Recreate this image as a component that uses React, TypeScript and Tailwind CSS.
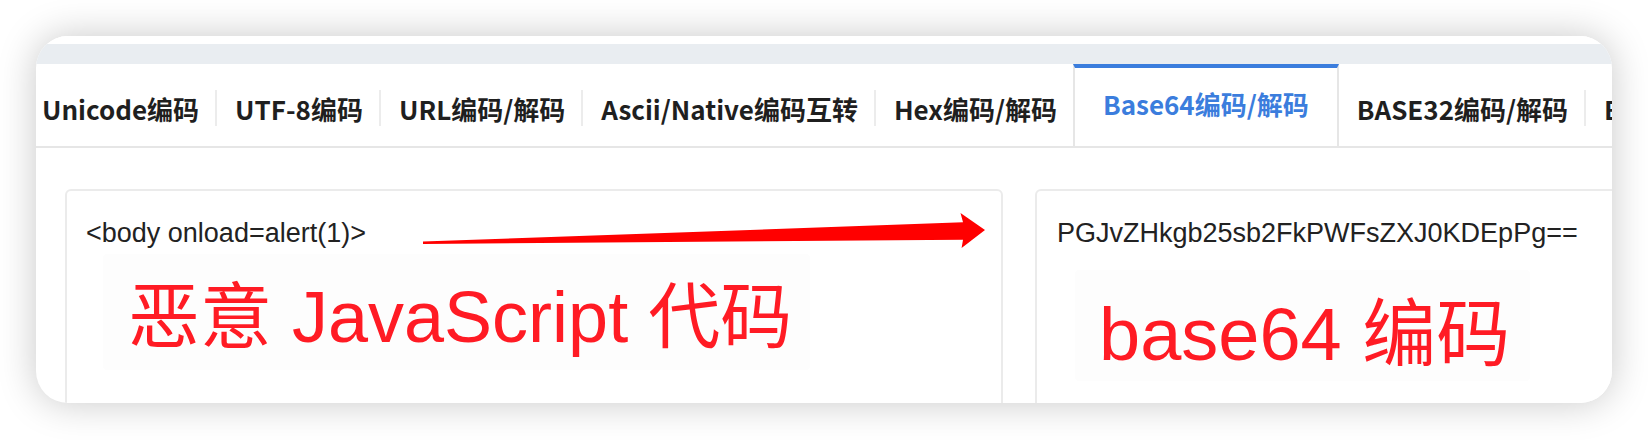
import React from 'react';

const tabs = [
  'Unicode编码',
  'UTF-8编码',
  'URL编码/解码',
  'Ascii/Native编码互转',
  'Hex编码/解码',
  'Base64编码/解码',
  'BASE32编码/解码',
  'BASE58编码/解码',
];

const ACTIVE = 5;

const cjk = { fontFamily: '"Noto Sans CJK SC", "Noto Sans", sans-serif' };
const sans = { fontFamily: '"Liberation Sans", "Noto Sans CJK SC", sans-serif' };

const Sep = () => <div className="self-center mt-[6px] h-9 w-[2px] shrink-0 bg-[#ececec]" />;

const TabBar: React.FC = () => {
  const items: React.ReactNode[] = [];
  tabs.forEach((t, i) => {
    const active = i === ACTIVE;
    if (i > 0 && !active && i - 1 !== ACTIVE) items.push(<Sep key={'s' + i} />);
    items.push(
      active ? (
        <div
          key={t}
          className="shrink-0 -mb-[2px] flex items-center bg-white border-t-4 border-x-2 border-t-[#3b7ddd] border-x-[#e6e6e6] px-[28px] pb-[10px] text-[26px] font-bold text-[#3b7ddd] whitespace-nowrap"
          style={cjk}
        >
          {t}
        </div>
      ) : (
        <div
          key={t}
          className="shrink-0 flex items-center pl-[18px] pr-[16px] pt-[7px] text-[26px] font-bold text-[#1f1f1f] whitespace-nowrap"
          style={cjk}
        >
          {t}
        </div>
      )
    );
  });
  return (
    <div className="h-[84px] shrink-0 flex items-stretch border-b-2 border-[#e6e6e6] overflow-hidden">
      <div className="flex items-stretch -ml-[12px]">{items}</div>
    </div>
  );
};

export default function App() {
  return (
    <div className="w-[1648px] h-[440px] bg-white pt-9 pl-9 overflow-hidden">
      <div className="w-[1576px] h-[367px] rounded-[32px] overflow-hidden bg-white shadow-[0_0_38px_rgba(0,0,0,0.22)] flex flex-col">
        <div className="h-2 shrink-0 bg-white" />
        <div className="h-5 shrink-0 bg-[#e9edf1]" />
        <TabBar />
        <div className="flex shrink-0 gap-8 pl-[29px] pt-[41px]">
          {/* input */}
          <div className="relative w-[938px] h-[240px] shrink-0 rounded-md border-2 border-[#ebebeb] bg-white">
            <div className="pl-[19px] pt-[29px] text-[27px] leading-none text-[#222]" style={sans}>
              {'<body onload=alert(1)>'}
            </div>
            <div className="ml-[36px] mt-[7px] w-[707px] h-[116px] bg-[#fdfdfd] rounded pl-[25px] pt-[27px]">
              <div className="text-[72px] leading-none text-[#ff1b24] whitespace-nowrap" style={sans}>
                恶意 JavaScript 代码
              </div>
            </div>
            <svg className="absolute left-0 top-0" width="938" height="80" viewBox="0 0 938 80">
              <polygon
                points="356,50.5 896,31.3 893.5,22 918,39 894.6,57 896,48.7 356,53"
                fill="#ff0000"
              />
            </svg>
          </div>
          {/* output */}
          <div className="w-[938px] h-[240px] shrink-0 rounded-md border-2 border-[#ebebeb] bg-white">
            <div className="pl-[20px] pt-[29px] text-[27px] leading-none text-[#222]" style={sans}>
              PGJvZHkgb25sb2FkPWFsZXJ0KDEpPg==
            </div>
            <div className="ml-[38px] mt-[23px] w-[455px] h-[111px] bg-[#fdfdfd] rounded pl-[24px] pt-[28px]">
              <div className="text-[74px] leading-none text-[#ff1b24] whitespace-nowrap" style={sans}>
                base64 编码
              </div>
            </div>
          </div>
        </div>
      </div>
    </div>
  );
}
